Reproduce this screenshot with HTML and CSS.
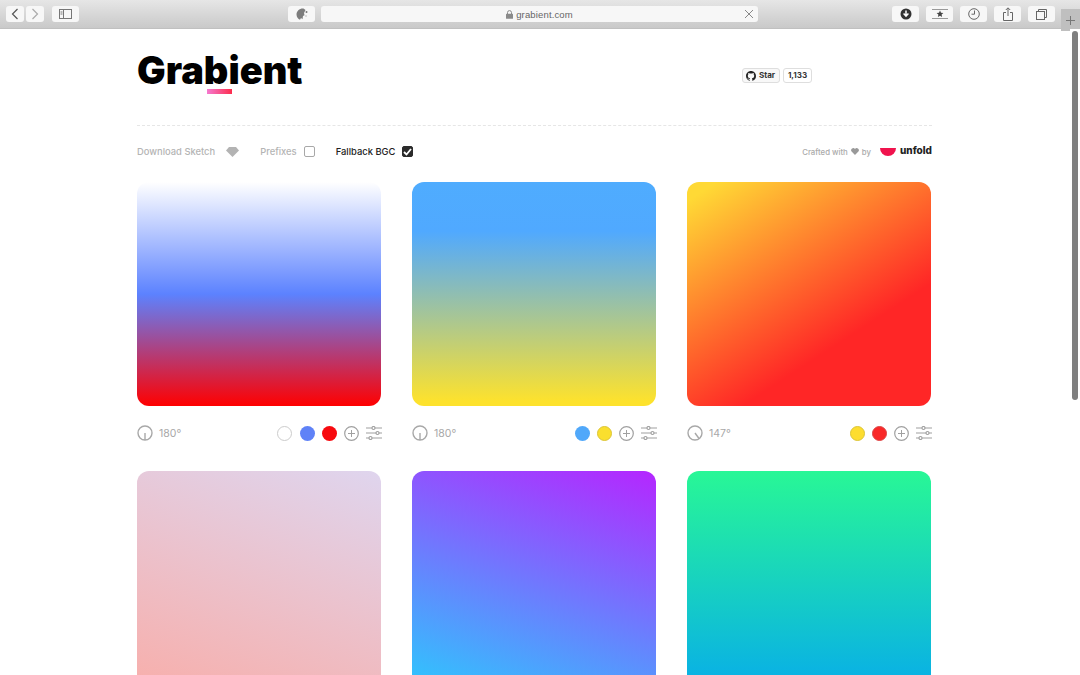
FILE: index.html
```html
<!DOCTYPE html>
<html lang="en">
<head>
<meta charset="utf-8">
<title>Grabient</title>
<link rel="stylesheet" href="styles.css">
</head>
<body>
<header class="toolbar">
  <div class="tb-left">
    <div class="btn-pair">
      <span class="tb-btn w-nav"><svg width="8" height="12" viewBox="0 0 8 12"><path d="M6.500 1 1.500 6l5 5" fill="none" stroke="#555" stroke-width="1.200"/></svg></span>
      <span class="tb-btn w-nav"><svg width="8" height="12" viewBox="0 0 8 12"><path d="M1.500 1l5 5-5 5" fill="none" stroke="#aaa" stroke-width="1.200"/></svg></span>
    </div>
    <span class="tb-btn w-wide"><svg width="13" height="10" viewBox="0 0 13 10"><rect x=".5" y=".5" width="12" height="9" fill="none" stroke="#777"/><path d="M4.500 0v10M1.500 3h2M1.500 5h2" stroke="#777" fill="none"/></svg></span>
  </div>
  <div class="tb-mid">
    <span class="tb-btn w-wide"><svg width="14" height="14" viewBox="0 0 14 14"><path d="M8.500 1.500C4.500 1.200 1.500 4 1.500 7.500c0 2.500 1.500 4.500 3.500 5.200l1-1.700 1.500 1.200.5-3.200 1.500-.8-.5-2.200L10.500 3z" fill="#7d7d7d"/><circle cx="11.500" cy="5" r="1" fill="#777"/><circle cx="11" cy="9" r=".7" fill="#aaa"/></svg></span>
    <div class="address">
      <span class="addr-text"><svg class="lock" width="7" height="9" viewBox="0 0 7 9"><path d="M1.500 4V2.600a2 2 0 0 1 4 0V4" fill="none" stroke="#8a8a8a"/><rect y="3.800" width="7" height="5" rx=".6" fill="#8a8a8a"/></svg>grabient.com</span>
      <svg class="addr-x" width="10" height="10" viewBox="0 0 10 10"><path d="M1 1l8 8M9 1 1 9" stroke="#888" stroke-width="1"/></svg>
    </div>
  </div>
  <div class="tb-right">
    <span class="tb-btn w-wide"><svg width="12" height="12" viewBox="0 0 12 12"><circle cx="6" cy="6" r="5.500" fill="#333"/><path d="M6 2.500v5M3.600 5.600 6 8.200l2.400-2.600" fill="none" stroke="#fff" stroke-width="1.500"/></svg></span>
    <span class="tb-btn w-wide"><svg width="16" height="10" viewBox="0 0 16 10"><path d="M0 .5h16M0 9.500h16" stroke="#999"/><path d="m8 1.500 1 2.300 2.400.2-1.800 1.600.5 2.400L8 6.800 5.900 8l.5-2.400L4.600 4 7 3.800z" fill="#444"/></svg></span>
    <span class="tb-btn w-wide"><svg width="12" height="12" viewBox="0 0 12 12"><circle cx="6" cy="6" r="5.300" fill="none" stroke="#666"/><path d="M6.500 2.500v3.700H3.500" fill="none" stroke="#666"/></svg></span>
    <span class="tb-btn w-wide"><svg width="10" height="14" viewBox="0 0 10 14"><path d="M3 5.500H.5v8h9v-8H7M5 9V1M2.800 3 5 .8 7.200 3" fill="none" stroke="#666"/></svg></span>
    <span class="tb-btn w-wide"><svg width="11" height="11" viewBox="0 0 11 11"><rect x=".5" y="2.500" width="8" height="8" fill="none" stroke="#666"/><path d="M2.500 2.500v-2h8v8h-2" fill="none" stroke="#666"/></svg></span>
    <span class="new-tab"><svg width="9" height="9" viewBox="0 0 9 9"><path d="M4.500 0v9M0 4.500h9" stroke="#777"/></svg></span>
  </div>
</header>
<div class="viewport">
  <main class="page">
    <section class="top">
      <div class="logo-wrap">
        <div class="logo">Grabient</div>
        <span class="logo-bar"></span>
      </div>
      <div class="gh">
        <span class="gh-btn"><svg width="10" height="10" viewBox="0 0 16 16"><path fill="#222" d="M8 0C3.580 0 0 3.580 0 8c0 3.540 2.290 6.530 5.470 7.590.4.070.55-.17.55-.38v-1.340c-2.230.48-2.690-1.080-2.690-1.080-.36-.92-.89-1.170-.89-1.170-.73-.5.050-.49.050-.49.8.060 1.230.82 1.230.82.710 1.220 1.870.87 2.330.66.070-.52.280-.87.510-1.070-1.780-.2-3.640-.89-3.640-3.950 0-.87.310-1.590.820-2.150-.08-.2-.36-1.020.080-2.120 0 0 .67-.21 2.200.82a7.600 7.600 0 0 1 4 0c1.530-1.040 2.200-.82 2.200-.82.440 1.100.16 1.920.08 2.120.51.560.82 1.270.82 2.150 0 3.070-1.870 3.750-3.650 3.950.29.250.54.730.54 1.480v2.200c0 .21.150.46.550.38A8 8 0 0 0 16 8c0-4.420-3.580-8-8-8z"/></svg>Star</span>
        <span class="gh-count">1,133</span>
      </div>
    </section>
    <section class="options">
      <div class="opts-left">
        <span class="opt">Download Sketch <svg class="diamond" width="13" height="10" viewBox="0 0 13 10"><path d="M3 0h7l3 3.500L6.500 10 0 3.500z" fill="#b3b3b3"/></svg></span>
        <span class="opt">Prefixes <span class="check"></span></span>
        <span class="opt opt-on">Fallback BGC <span class="check check-on"><svg width="9" height="8" viewBox="0 0 9 8"><path d="M1 4l2.500 2.500L8 1" fill="none" stroke="#fff" stroke-width="1.800"/></svg></span></span>
      </div>
      <div class="credit">
        <span class="crafted">Crafted with <svg width="8" height="7" viewBox="0 0 8 7"><path d="M4 7 .6 3.500A2 2 0 0 1 4 1a2 2 0 0 1 3.400 2.500z" fill="#999"/></svg> by</span>
        <svg class="unfold-mark" width="16" height="8" viewBox="0 0 16 8"><path d="M0 0h16a8 8 0 0 1-16 0z" fill="#f0134d"/></svg>
        <span class="unfold">unfold</span>
      </div>
    </section>
    <section class="grid">
      <article class="card">
        <div class="swatch g1"></div>
        <div class="meta">
          <svg class="angle" width="16" height="16" viewBox="0 0 16 16"><circle cx="8" cy="8" r="7" fill="none" stroke="#a8a8a8" stroke-width="1.400"/><path d="M8 8v7" stroke="#a8a8a8" stroke-width="1.400"/></svg>
          <span class="deg">180°</span>
          <span class="stops"><i class="dot d-white"></i><i class="dot d-blue"></i><i class="dot d-red"></i></span>
          <svg class="plus" width="15" height="15" viewBox="0 0 15 15"><circle cx="7.500" cy="7.500" r="6.800" fill="none" stroke="#a0a0a0" stroke-width="1.200"/><path d="M7.500 4v7M4 7.500h7" stroke="#a0a0a0"/></svg>
          <svg class="sliders" width="16" height="14" viewBox="0 0 16 14"><path d="M0 2h6M9 2h7M0 7h10M13 7h3M0 12h3M6 12h10" stroke="#a0a0a0" stroke-width="1.200"/><circle cx="7.500" cy="2" r="1.500" fill="none" stroke="#a0a0a0" stroke-width="1.200"/><circle cx="11.500" cy="7" r="1.500" fill="none" stroke="#a0a0a0" stroke-width="1.200"/><circle cx="4.500" cy="12" r="1.500" fill="none" stroke="#a0a0a0" stroke-width="1.200"/></svg>
        </div>
      </article>
      <article class="card">
        <div class="swatch g2"></div>
        <div class="meta">
          <svg class="angle" width="16" height="16" viewBox="0 0 16 16"><circle cx="8" cy="8" r="7" fill="none" stroke="#a8a8a8" stroke-width="1.400"/><path d="M8 8v7" stroke="#a8a8a8" stroke-width="1.400"/></svg>
          <span class="deg">180°</span>
          <span class="stops"><i class="dot d-sky"></i><i class="dot d-yellow"></i></span>
          <svg class="plus" width="15" height="15" viewBox="0 0 15 15"><circle cx="7.500" cy="7.500" r="6.800" fill="none" stroke="#a0a0a0" stroke-width="1.200"/><path d="M7.500 4v7M4 7.500h7" stroke="#a0a0a0"/></svg>
          <svg class="sliders" width="16" height="14" viewBox="0 0 16 14"><path d="M0 2h6M9 2h7M0 7h10M13 7h3M0 12h3M6 12h10" stroke="#a0a0a0" stroke-width="1.200"/><circle cx="7.500" cy="2" r="1.500" fill="none" stroke="#a0a0a0" stroke-width="1.200"/><circle cx="11.500" cy="7" r="1.500" fill="none" stroke="#a0a0a0" stroke-width="1.200"/><circle cx="4.500" cy="12" r="1.500" fill="none" stroke="#a0a0a0" stroke-width="1.200"/></svg>
        </div>
      </article>
      <article class="card">
        <div class="swatch g3"></div>
        <div class="meta">
          <svg class="angle" width="16" height="16" viewBox="0 0 16 16"><circle cx="8" cy="8" r="7" fill="none" stroke="#a8a8a8" stroke-width="1.400"/><path d="M8 8l4 5.500" stroke="#a8a8a8" stroke-width="1.400"/></svg>
          <span class="deg">147°</span>
          <span class="stops"><i class="dot d-yellow2"></i><i class="dot d-red2"></i></span>
          <svg class="plus" width="15" height="15" viewBox="0 0 15 15"><circle cx="7.500" cy="7.500" r="6.800" fill="none" stroke="#a0a0a0" stroke-width="1.200"/><path d="M7.500 4v7M4 7.500h7" stroke="#a0a0a0"/></svg>
          <svg class="sliders" width="16" height="14" viewBox="0 0 16 14"><path d="M0 2h6M9 2h7M0 7h10M13 7h3M0 12h3M6 12h10" stroke="#a0a0a0" stroke-width="1.200"/><circle cx="7.500" cy="2" r="1.500" fill="none" stroke="#a0a0a0" stroke-width="1.200"/><circle cx="11.500" cy="7" r="1.500" fill="none" stroke="#a0a0a0" stroke-width="1.200"/><circle cx="4.500" cy="12" r="1.500" fill="none" stroke="#a0a0a0" stroke-width="1.200"/></svg>
        </div>
      </article>
      <article class="card"><div class="swatch g4"></div></article>
      <article class="card"><div class="swatch g5"></div></article>
      <article class="card"><div class="swatch g6"></div></article>
    </section>
  </main>
  <div class="scrollbar"><span class="thumb"></span></div>
</div>
</body>
</html>
```
FILE: styles.css
```css
* { box-sizing: border-box; }
html, body { margin: 0; height: 100%; overflow: hidden; background: #fff; }
body { font-family: "Inter", "Liberation Sans", sans-serif; font-feature-settings: "cv11"; color: #222; display: flex; flex-direction: column; height: 675px; }

.toolbar {
  height: 29px; flex: none; display: flex; align-items: flex-start; justify-content: space-between;
  padding: 6px 0 0 6px;
  background: linear-gradient(#e6e6e6, #c9c9c9);
  border-bottom: 1px solid #c0c0c0;
}
.tb-left { display: flex; gap: 8px; width: 282px; }
.btn-pair { display: flex; gap: 2px; }
.tb-btn {
  height: 16px; display: flex; align-items: center; justify-content: center;
  background: #f7f7f7; border-radius: 3px;
}
.w-nav { width: 18px; }
.w-wide { width: 27px; }
.tb-mid { display: flex; gap: 6px; }
.address {
  width: 437px; height: 16px; background: #f7f7f7; border-radius: 3px;
  display: flex; align-items: center; justify-content: center; position: relative;
}
.addr-text { font: 9.500px "Liberation Sans", sans-serif; color: #666; display: flex; align-items: center; gap: 3px; letter-spacing: .15px; }
.addr-x { position: absolute; right: 4px; top: 3px; }
.tb-right { display: flex; gap: 7px; margin-left: auto; align-items: flex-start; }
.new-tab {
  width: 19px; height: 22px; margin: 3px 0 0 -1px; background: #bfbfbf;
  display: flex; align-items: center; justify-content: center;
}

.viewport { flex: 1; display: flex; min-height: 0; }
.page { flex: 1; padding: 0 0 0 137px; min-width: 0; overflow: hidden; }
.scrollbar { width: 10px; padding: 2px 2px 0 2px; background: #fff; }
.thumb { display: block; width: 6px; height: 369px; background: #7f7f7f; border-radius: 3px; }

.top { display: flex; height: 97px; width: 795px; border-bottom: 1px dashed #e6e6e6; padding-top: 22px; }
.logo-wrap { position: relative; width: 605px; height: 44px; }
.logo { font: 900 38px/38px "Inter", sans-serif; color: #000; letter-spacing: 0; }
.logo-bar { position: absolute; left: 70px; top: 38px; width: 25px; height: 5px; background: linear-gradient(90deg, #f57ad0, #fc2c4d); }
.gh { display: flex; gap: 3px; margin-top: 17px; }
.gh-btn, .gh-count {
  height: 15px; border: 1px solid #dedede; border-radius: 3px; background: #f8f8f8;
  font: 700 8px/13px "Inter", sans-serif; color: #333; display: flex; align-items: center; padding: 0 3px;
}
.gh-btn { gap: 3px; width: 38px; }
.gh-count { width: 29px; justify-content: center; background: #fff; }

.options { width: 795px; height: 56px; padding-bottom: 5px; display: flex; justify-content: space-between; align-items: center; }
.opts-left { display: flex; gap: 21px; }
.opt { font: 500 9.400px "Inter", sans-serif; color: #b4b4b4; display: flex; align-items: center; gap: 7px; }
.opt-on { color: #222; }
.diamond { margin-left: 4px; }
.check { width: 11px; height: 11px; border: 1.500px solid #a8a8a8; border-radius: 2px; display: flex; align-items: center; justify-content: center; }
.check-on { background: #2b2b2b; border-color: #2b2b2b; }
.credit { display: flex; align-items: center; }
.crafted { font: 500 7.800px "Inter", sans-serif; color: #aaa; display: flex; align-items: center; gap: 3px; margin-right: 9px; }
.unfold-mark { margin-right: 4px; margin-top: 1px; }
.unfold { font: 800 10px "Inter", sans-serif; color: #222; margin-top: -3px; }

.grid { display: grid; grid-template-columns: repeat(3, 244px); column-gap: 31px; row-gap: 65px; width: 795px; }
.swatch { height: 224px; border-radius: 12px; }
.card { position: relative; }
.meta { display: flex; align-items: center; height: 24px; margin: 15px -1px -39px 0; color: #aaa; }
.deg { font: 400 10.500px "Inter", sans-serif; color: #a8a8a8; margin-left: 6px; }
.stops { margin-left: auto; display: flex; gap: 7.500px; }
.dot { width: 15px; height: 15px; border-radius: 50%; display: block; }
.d-white { background: #fff; border: 1px solid #ccc; }
.d-blue { background: #5f82f7; }
.d-red { background: #f70a0f; }
.d-sky { background: #50a8fa; }
.d-yellow { background: #fadf2e; border: 1px solid #dcc537; }
.d-yellow2 { background: #fddd2f; border: 1px solid #dcc537; }
.d-red2 { background: #f92828; border: 1px solid #d44; }
.plus { margin-left: 7px; }
.sliders { margin-left: 7px; }

.g1 { background: linear-gradient(180deg, #fff 0%, #5c82ff 50%, #ff0000 100%); }
.g2 { background: linear-gradient(180deg, #4facfe 0%, #50a9ff 22%, #fde22d 98%); }
.g3 { background: linear-gradient(147deg, #ffd935 5%, #ff2626 68%); }
.g4 { background: linear-gradient(200deg, #dfd5ee 0%, #f8aeaa 100%); }
.g5 { background: linear-gradient(20deg, #2bcafd 0%, #b526ff 100%); }
.g6 { background: linear-gradient(180deg, #28f796 0%, #07acea 100%); }
```
